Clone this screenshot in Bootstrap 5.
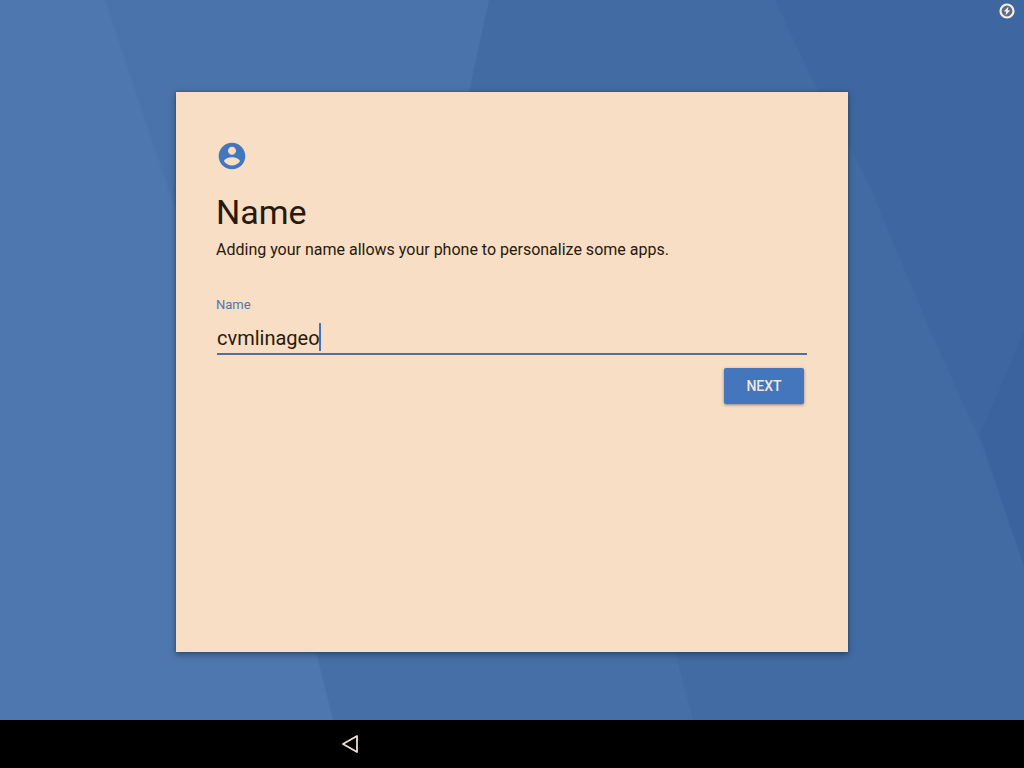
<!DOCTYPE html>
<html lang="en">
<head>
<meta charset="utf-8">
<meta name="viewport" content="width=device-width, initial-scale=1">
<title>Name</title>
<link href="https://cdn.jsdelivr.net/npm/bootstrap@5.3.0/dist/css/bootstrap.min.css" rel="stylesheet">
<style>
  body { font-family: Roboto, "Noto Sans", sans-serif; background: #426ba4; color: #27190e; }
  .backdrop { z-index: -1; }
  .status-bar { height: 24px; padding: 3px 9px 0; }
  .stage { padding: 68px 16px; }
  .setup-panel {
    max-width: 672px; padding: 48px 40px 40px; background: #f8dec4;
    box-shadow: 0 3px 6px rgba(30, 45, 65, .5), 0 0 3px rgba(30, 45, 65, .45);
  }
  .setup-title { font-size: 34px; line-height: 40px; margin: 20px 0 8px; font-weight: 400; }
  .setup-text { font-size: 16px; line-height: 20px; margin: 0 0 38px; }
  .name-label { font-size: 13px; line-height: 14px; color: #4b77b8; font-weight: 400; margin-bottom: 10px; }
  .name-field { margin: 0 1px; }
  .name-field .form-control {
    font-size: 20px; line-height: 24px; padding: 4px 0 3px; color: #27190e; min-height: 0;
    border: 0; border-bottom: 2px solid #50719f; border-radius: 0; background: transparent;
  }
  .name-field .form-control:focus { box-shadow: none; }
  .text-cursor { left: 102px; top: 1px; width: 2px; height: 28px; background: #4373b8; }
  .next-btn {
    width: 80px; height: 36px; margin: 13px 4px 0; padding: 0; border: 0; border-radius: 2px;
    font-size: 14px; line-height: 20px; font-weight: 500; color: #f4e6dc; background: #4376bd;
    box-shadow: 0 1px 3px rgba(30, 40, 70, .5);
  }
  .next-btn:hover { color: #fff; background: #3a6bb0; }
  .nav-bar { background: #000; }
  .nav-keys { max-width: 486px; }
  .back-btn { width: 48px; height: 48px; }
</style>
</head>
<body>
<div class="position-relative d-flex flex-column min-vh-100">
  <svg class="backdrop position-absolute top-0 start-0 w-100 h-100" viewBox="0 0 1024 768" preserveAspectRatio="none" aria-hidden="true">
    <path fill="#426ba4" d="M0 0H1024V768H0z"/>
    <path fill="#4a73ab" d="M0 0H489L469 92L400 400L320 400z"/>
    <path fill="#466fa8" d="M200 300H590L676 656L693 720V768H200z"/>
    <path fill="#4f77af" d="M0 0H105L145 120L176 210L317 656L333 720V768H0z"/>
    <path fill="#3e67a1" d="M775 0H1024V566L980 440L930 330L867 180L815 85z"/>
    <path fill="#3b639e" d="M1024 330L1002 384L980 434L1002 500L1024 566z"/>
  </svg>

  <header class="status-bar d-flex justify-content-end">
    <svg width="16" height="16" viewBox="0 0 16 16" role="img" aria-label="Charging">
      <circle cx="8" cy="8" r="6.5" fill="#5c6a88" stroke="#f5efea" stroke-width="2.2"/>
      <path d="M9.5 3.500L4.800 8.600H7.200L6.500 12.500L11.200 7.300H8.800z" fill="#f5efea"/>
    </svg>
  </header>

  <main class="stage d-flex flex-grow-1 justify-content-center">
    <form class="setup-panel w-100" onsubmit="return false">
      <svg class="d-block" width="32" height="32" viewBox="0 0 24 24" aria-hidden="true">
        <path fill="#4376bd" d="M12 2C6.48 2 2 6.48 2 12s4.48 10 10 10 10-4.48 10-10S17.52 2 12 2zm0 3c1.66 0 3 1.34 3 3s-1.34 3-3 3-3-1.34-3-3 1.34-3 3-3zm0 14.2c-2.5 0-4.71-1.28-6-3.22.03-1.99 4-3.08 6-3.08 1.99 0 5.97 1.09 6 3.08-1.29 1.94-3.5 3.22-6 3.22z"/>
      </svg>
      <h1 class="setup-title">Name</h1>
      <p class="setup-text">Adding your name allows your phone to personalize some apps.</p>
      <label class="name-label d-block" for="name">Name</label>
      <div class="name-field position-relative">
        <input class="form-control" id="name" type="text" value="cvmlinageo" autocomplete="off" spellcheck="false">
        <span class="text-cursor position-absolute"></span>
      </div>
      <div class="d-flex justify-content-end">
        <button class="btn next-btn" type="submit">NEXT</button>
      </div>
    </form>
  </main>

  <nav class="nav-bar" aria-label="System">
    <div class="nav-keys row g-0 mx-auto">
      <div class="col-4 d-flex justify-content-center">
        <button class="back-btn btn border-0 p-0 d-flex align-items-center justify-content-center" type="button" aria-label="Back">
          <svg width="20" height="20" viewBox="0 0 20 20" aria-hidden="true">
            <path d="M17 2V18L3 10z" fill="none" stroke="#efe0d6" stroke-width="1.8" stroke-linejoin="round"/>
          </svg>
        </button>
      </div>
    </div>
  </nav>
</div>
<script src="https://cdn.jsdelivr.net/npm/bootstrap@5.3.0/dist/js/bootstrap.bundle.min.js"></script>
</body>
</html>
